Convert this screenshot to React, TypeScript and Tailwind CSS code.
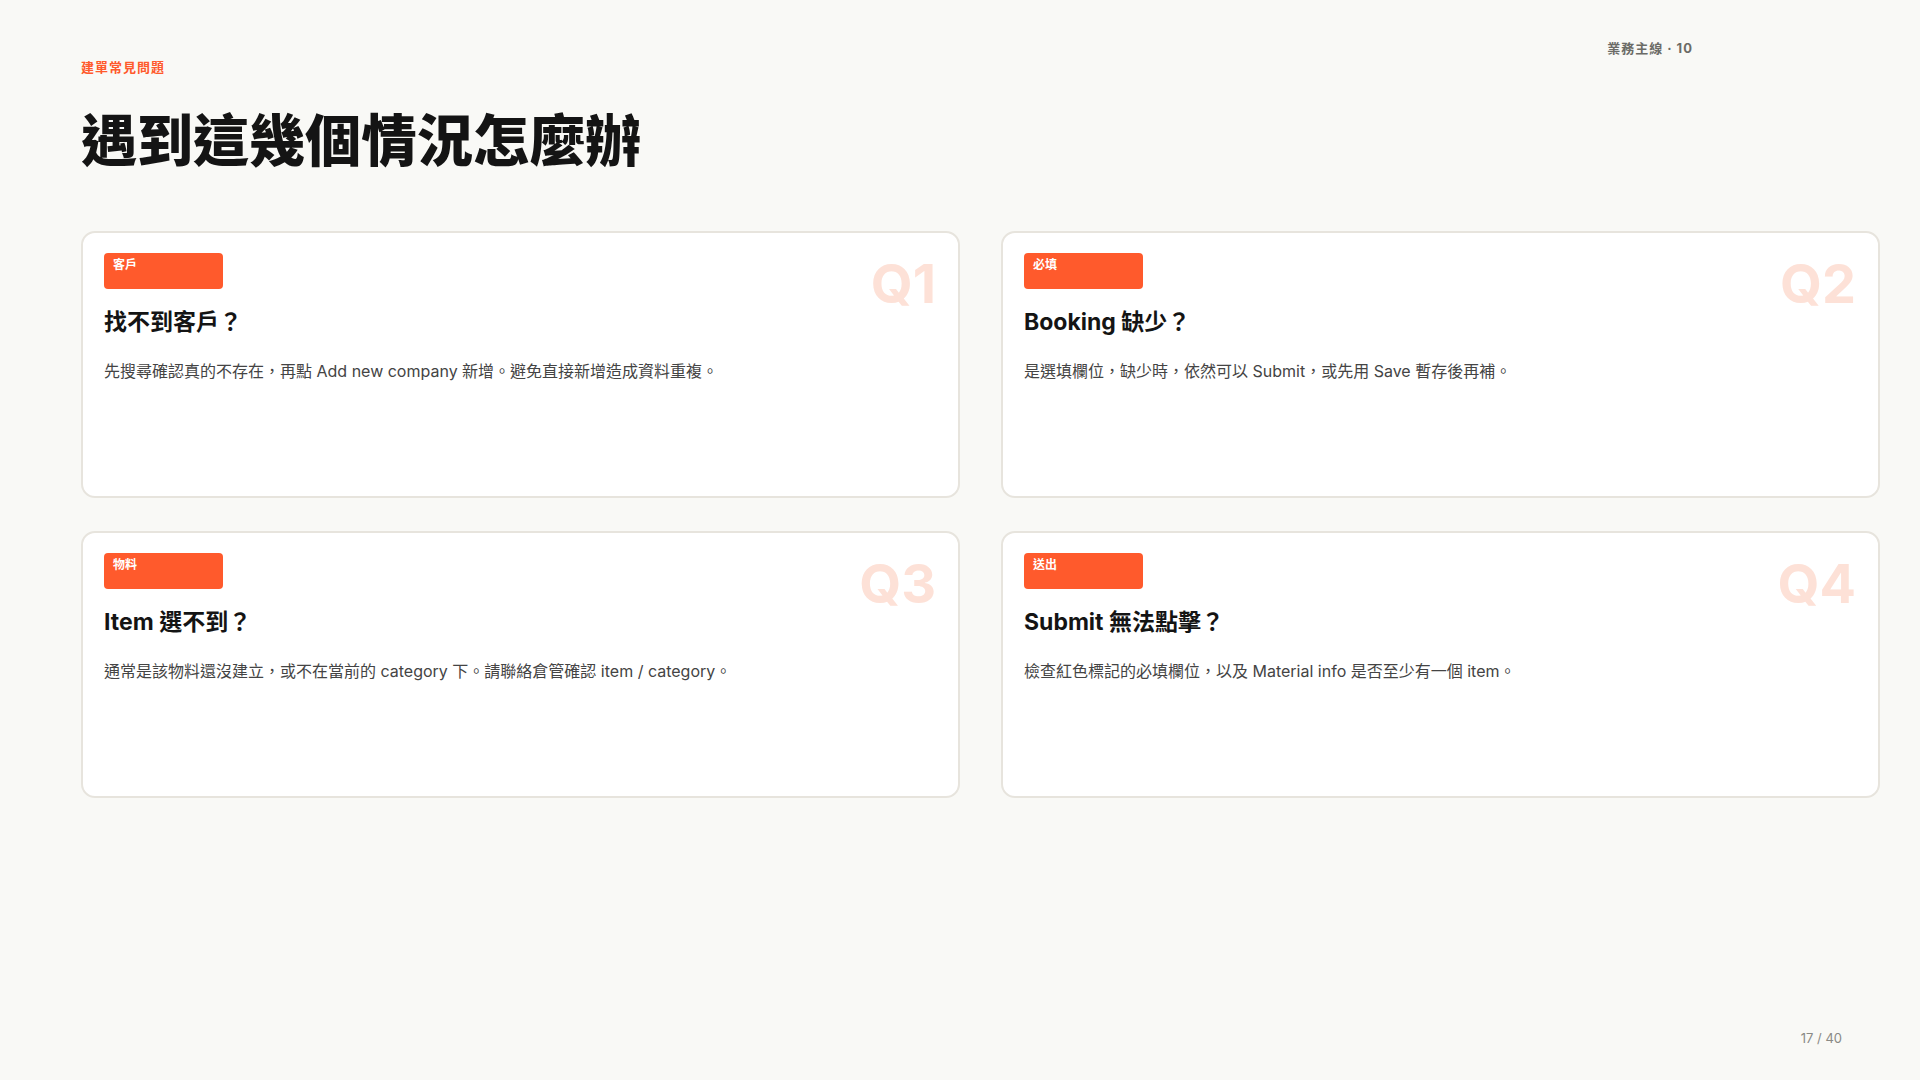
const cards = [
  { tag: "客戶", q: "Q1", title: "找不到客戶？", desc: "先搜尋確認真的不存在，再點 Add new company 新增。避免直接新增造成資料重複。" },
  { tag: "必填", q: "Q2", title: "Booking 缺少？", desc: "是選填欄位，缺少時，依然可以 Submit，或先用 Save 暫存後再補。" },
  { tag: "物料", q: "Q3", title: "Item 選不到？", desc: "通常是該物料還沒建立，或不在當前的 category 下。請聯絡倉管確認 item / category。" },
  { tag: "送出", q: "Q4", title: "Submit 無法點擊？", desc: "檢查紅色標記的必填欄位，以及 Material info 是否至少有一個 item。" },
];

const App = () => {
  return (
    <div
      className="w-[1920px] h-[1080px] bg-[#f9f9f6] flex flex-col pl-[81px] pr-[40px] pt-[40px] overflow-hidden"
      style={{ fontFamily: 'Inter, "Noto Sans CJK TC", sans-serif' }}
    >
      <div className="flex justify-end pr-[187px]">
        <div className="text-[13px] leading-4 font-bold tracking-[1px] text-[#6b6b66]">業務主線 · 10</div>
      </div>
      <div className="mt-[3px] text-[13px] leading-4 font-bold tracking-[1px] text-[#ff5a2c]">建單常見問題</div>
      <h1 className="mt-[33px] text-[56px] leading-[67px] font-black text-[#141414]">遇到這幾個情況怎麼辦</h1>

      <div className="mt-[56px] grid grid-cols-2 gap-x-[41px] gap-y-[33px]">
        {cards.map((c) => (
          <div
            key={c.q}
            className="relative h-[267px] bg-white border-2 border-[#e7e4dd] rounded-[14px] pt-[20px] px-[21px]"
          >
            <div className="absolute top-[24px] right-[22px] text-[54px] leading-none font-bold text-[#fde1d7]">
              {c.q}
            </div>
            <div className="w-[119px] h-[36px] bg-[#ff5a2c] rounded-[4px] px-[9px] pt-[4px] text-[12px] leading-4 font-bold text-white">
              {c.tag}
            </div>
            <div className="mt-[18px] text-[23px] leading-[30px] font-bold text-[#141414]">{c.title}</div>
            <div className="mt-[22px] text-[16px] leading-6 text-[#444]">{c.desc}</div>
          </div>
        ))}
      </div>

      <div className="mt-auto mb-[34px] flex justify-end pr-[38px]">
        <div className="text-[13px] leading-4 text-[#8a8a85]">17 / 40</div>
      </div>
    </div>
  );
};

export default App;
